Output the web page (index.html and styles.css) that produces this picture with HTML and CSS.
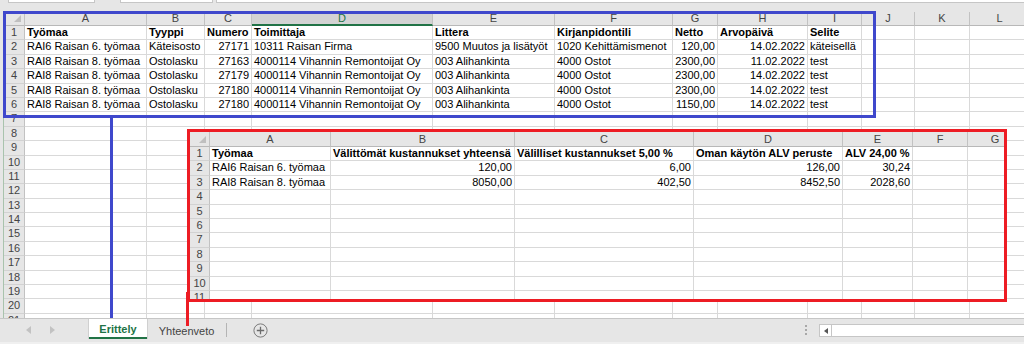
FILE: index.html
```html
<!DOCTYPE html>
<html lang="fi">
<head>
<meta charset="utf-8">
<title>Erittely</title>
<link rel="stylesheet" href="styles.css">
</head>
<body>
<div class="top"><div class="fbox f1"></div><div class="fbox f2"></div><div class="fbox f3"></div></div>

<div class="sheet">
  <div class="edge"></div>
  <div class="grid main">
    <div class="row head"><span class="corner"></span><span>A</span><span>B</span><span>C</span><span class="sel">D</span><span>E</span><span>F</span><span>G</span><span>H</span><span>I</span><span>J</span><span>K</span><span>L</span></div>
    <div class="row b"><span class="rh">1</span><span>Työmaa</span><span>Tyyppi</span><span>Numero</span><span>Toimittaja</span><span>Littera</span><span>Kirjanpidontili</span><span>Netto</span><span>Arvopäivä</span><span>Selite</span><span></span><span></span><span></span></div>
    <div class="row"><span class="rh">2</span><span>RAI6 Raisan 6. työmaa</span><span>Käteisosto</span><span class="n">27171</span><span>10311 Raisan Firma</span><span>9500 Muutos ja lisätyöt</span><span>1020 Kehittämismenot</span><span class="n">120,00</span><span class="n">14.02.2022</span><span>käteisellä</span><span></span><span></span><span></span></div>
    <div class="row"><span class="rh">3</span><span>RAI8 Raisan 8. työmaa</span><span>Ostolasku</span><span class="n">27163</span><span>4000114 Vihannin Remontoijat Oy</span><span>003 Alihankinta</span><span>4000 Ostot</span><span class="n">2300,00</span><span class="n">11.02.2022</span><span>test</span><span></span><span></span><span></span></div>
    <div class="row"><span class="rh">4</span><span>RAI8 Raisan 8. työmaa</span><span>Ostolasku</span><span class="n">27179</span><span>4000114 Vihannin Remontoijat Oy</span><span>003 Alihankinta</span><span>4000 Ostot</span><span class="n">2300,00</span><span class="n">14.02.2022</span><span>test</span><span></span><span></span><span></span></div>
    <div class="row"><span class="rh">5</span><span>RAI8 Raisan 8. työmaa</span><span>Ostolasku</span><span class="n">27180</span><span>4000114 Vihannin Remontoijat Oy</span><span>003 Alihankinta</span><span>4000 Ostot</span><span class="n">2300,00</span><span class="n">14.02.2022</span><span>test</span><span></span><span></span><span></span></div>
    <div class="row"><span class="rh">6</span><span>RAI8 Raisan 8. työmaa</span><span>Ostolasku</span><span class="n">27180</span><span>4000114 Vihannin Remontoijat Oy</span><span>003 Alihankinta</span><span>4000 Ostot</span><span class="n">1150,00</span><span class="n">14.02.2022</span><span>test</span><span></span><span></span><span></span></div>
    <div class="row"><span class="rh">7</span><span></span><span></span><span></span><span></span><span></span><span></span><span></span><span></span><span></span><span></span><span></span><span></span></div>
    <div class="row"><span class="rh">8</span><span></span><span></span><span></span><span></span><span></span><span></span><span></span><span></span><span></span><span></span><span></span><span></span></div>
    <div class="row"><span class="rh">9</span><span></span><span></span><span></span><span></span><span></span><span></span><span></span><span></span><span></span><span></span><span></span><span></span></div>
    <div class="row"><span class="rh">10</span><span></span><span></span><span></span><span></span><span></span><span></span><span></span><span></span><span></span><span></span><span></span><span></span></div>
    <div class="row"><span class="rh">11</span><span></span><span></span><span></span><span></span><span></span><span></span><span></span><span></span><span></span><span></span><span></span><span></span></div>
    <div class="row"><span class="rh">12</span><span></span><span></span><span></span><span></span><span></span><span></span><span></span><span></span><span></span><span></span><span></span><span></span></div>
    <div class="row"><span class="rh">13</span><span></span><span></span><span></span><span></span><span></span><span></span><span></span><span></span><span></span><span></span><span></span><span></span></div>
    <div class="row"><span class="rh">14</span><span></span><span></span><span></span><span></span><span></span><span></span><span></span><span></span><span></span><span></span><span></span><span></span></div>
    <div class="row"><span class="rh">15</span><span></span><span></span><span></span><span></span><span></span><span></span><span></span><span></span><span></span><span></span><span></span><span></span></div>
    <div class="row"><span class="rh">16</span><span></span><span></span><span></span><span></span><span></span><span></span><span></span><span></span><span></span><span></span><span></span><span></span></div>
    <div class="row"><span class="rh">17</span><span></span><span></span><span></span><span></span><span></span><span></span><span></span><span></span><span></span><span></span><span></span><span></span></div>
    <div class="row"><span class="rh">18</span><span></span><span></span><span></span><span></span><span></span><span></span><span></span><span></span><span></span><span></span><span></span><span></span></div>
    <div class="row"><span class="rh">19</span><span></span><span></span><span></span><span></span><span></span><span></span><span></span><span></span><span></span><span></span><span></span><span></span></div>
    <div class="row"><span class="rh">20</span><span></span><span></span><span></span><span></span><span></span><span></span><span></span><span></span><span></span><span></span><span></span><span></span></div>
    <div class="row"><span class="rh">21</span><span></span><span></span><span></span><span></span><span></span><span></span><span></span><span></span><span></span><span></span><span></span><span></span></div>
  </div>
</div>

<div class="tabbar">
  <div class="nav">
    <svg class="arr-l" width="5" height="8" viewBox="0 0 5 8"><path d="M5 0L0 4L5 8Z" fill="#c2c2c2"/></svg>
    <svg class="arr-r" width="5" height="8" viewBox="0 0 5 8"><path d="M0 0L5 4L0 8Z" fill="#c2c2c2"/></svg>
  </div>
  <div class="tab active">Erittely</div>
  <div class="tab other">Yhteenveto</div>
  <span class="sep"></span>
  <svg class="add" width="15" height="15" viewBox="0 0 15 15"><circle cx="7.5" cy="7.5" r="6.6" fill="none" stroke="#7b7b7b" stroke-width="1"/><path d="M7.5 3.8v7.4M3.8 7.5h7.4" stroke="#6b6b6b" stroke-width="1.3"/></svg>
  <div class="dots"><i></i><i></i><i></i></div>
  <div class="hscroll"><span class="sbtn"><svg width="4" height="6" viewBox="0 0 4 6"><path d="M4 0L0 3L4 6Z" fill="#555"/></svg></span></div>
</div>

<div class="mark blue-box"></div>
<div class="mark blue-line"></div>

<div class="inset">
  <div class="grid sub">
    <div class="row head"><span class="corner"></span><span>A</span><span>B</span><span>C</span><span>D</span><span>E</span><span>F</span><span>G</span></div>
    <div class="row b"><span class="rh">1</span><span>Työmaa</span><span>Välittömät kustannukset yhteensä</span><span>Välilliset kustannukset 5,00 %</span><span>Oman käytön ALV peruste</span><span>ALV 24,00 %</span><span></span><span></span></div>
    <div class="row"><span class="rh">2</span><span>RAI6 Raisan 6. työmaa</span><span class="n">120,00</span><span class="n">6,00</span><span class="n">126,00</span><span class="n">30,24</span><span></span><span></span></div>
    <div class="row"><span class="rh">3</span><span>RAI8 Raisan 8. työmaa</span><span class="n">8050,00</span><span class="n">402,50</span><span class="n">8452,50</span><span class="n">2028,60</span><span></span><span></span></div>
    <div class="row"><span class="rh">4</span><span></span><span></span><span></span><span></span><span></span><span></span><span></span></div>
    <div class="row"><span class="rh">5</span><span></span><span></span><span></span><span></span><span></span><span></span><span></span></div>
    <div class="row"><span class="rh">6</span><span></span><span></span><span></span><span></span><span></span><span></span><span></span></div>
    <div class="row"><span class="rh">7</span><span></span><span></span><span></span><span></span><span></span><span></span><span></span></div>
    <div class="row"><span class="rh">8</span><span></span><span></span><span></span><span></span><span></span><span></span><span></span></div>
    <div class="row"><span class="rh">9</span><span></span><span></span><span></span><span></span><span></span><span></span><span></span></div>
    <div class="row"><span class="rh">10</span><span></span><span></span><span></span><span></span><span></span><span></span><span></span></div>
    <div class="row"><span class="rh">11</span><span></span><span></span><span></span><span></span><span></span><span></span><span></span></div>
  </div>
</div>

<div class="mark red-line"></div>
</body>
</html>
```

FILE: styles.css
```css
* { box-sizing: border-box; }

body {
  margin: 0;
  width: 1024px;
  height: 344px;
  overflow: hidden;
  position: relative;
  background: #e6e6e6;
  font-family: "Liberation Sans", Arial, sans-serif;
  font-size: 11px;
  color: #000;
}

/* top strip (bottom of formula bar) */
.top {
  height: 12px;
  display: flex;
  align-items: flex-start;
}
.fbox {
  height: 3px;
  background: #fff;
  border: 1px solid #c6c6c6;
  border-top: none;
}
.f1 { margin-left: 8px; width: 87px; }
.f2 { margin-left: 25px; width: 93px; }
.f3 { margin-left: 3px; flex: 1; border-right: none; }

/* sheet */
.sheet {
  display: flex;
  height: 306px;
  overflow: hidden;
  padding-left: 3px;
  background: #e6e6e6;
}
.edge {
  flex: none;
  width: 1px;
  background: #a9c3ad;
}
.grid { flex: none; }

.row {
  display: grid;
  height: 14.4px;
}
.main .row {
  grid-template-columns: 21px 122px 58px 47px 181px 122px 118px 45px 90px 54px 53px 55px 60px;
}
.sub .row {
  grid-template-columns: 20px 121px 184px 179px 149px 70px 55px 55px;
}

.row > span {
  display: block;
  border-right: 1px solid #d9d9d9;
  border-bottom: 1px solid #d9d9d9;
  padding: 0 2px;
  line-height: 13.4px;
  white-space: nowrap;
  overflow: hidden;
  background: #fff;
}
.row > .n { text-align: right; }
.row.b > span { font-weight: bold; }
.row > .rh {
  background: #e6e6e6;
  color: #444;
  font-weight: normal !important;
  text-align: center;
  padding: 0;
  border-right-color: #c2c2c2;
  border-bottom-color: #d2d2d2;
}

.row.head { height: 14px; }
.sub .row.head { height: 15px; }
.row.head > span {
  background: #e6e6e6;
  color: #444;
  text-align: center;
  padding: 0;
  line-height: 13px;
  border-right-color: #c2c2c2;
  border-bottom-color: #b8b8b8;
}
.sub .row.head > span { line-height: 14px; }
.row.head > .sel {
  background: #d3d3d3;
  color: #217346;
  border-bottom: 2px solid #217346;
  line-height: 12px;
}
.row.head > .corner { position: relative; }
.row.head > .corner::after {
  content: "";
  position: absolute;
  right: 3px;
  bottom: 3px;
  border-left: 7px solid transparent;
  border-bottom: 7px solid #bfbfbf;
}

/* sheet tabs */
.tabbar {
  display: flex;
  align-items: flex-start;
  height: 26px;
  border-top: 1px solid #c6c6c6;
  border-bottom: 2px solid #f0f0f0;
  background: #e6e6e6;
}
.nav {
  flex: none;
  width: 89px;
  height: 22px;
  display: flex;
  align-items: center;
}
.arr-l { margin-left: 26px; }
.arr-r { margin-left: 19px; }

.tab {
  flex: none;
  height: 22px;
  display: flex;
  align-items: center;
  justify-content: center;
  color: #444;
  padding-top: 1px;
}
.tab.active {
  width: 58px;
  height: 20px;
  padding-top: 2px;
  background: #fff;
  color: #217346;
  font-weight: bold;
  border-bottom: 2px solid #217346;
  box-shadow: -1px 0 0 #d0d0d0, 1px 0 0 #d0d0d0;
}
.tab.other { width: 79px; }
.sep {
  flex: none;
  width: 1px;
  height: 14px;
  margin-top: 4px;
  background: #b4b4b4;
}
.add {
  flex: none;
  margin-left: 26px;
  margin-top: 4px;
}
.dots {
  margin-left: auto;
  margin-top: 6px;
  width: 2px;
  display: flex;
  flex-direction: column;
  gap: 2px;
}
.dots i {
  display: block;
  width: 2px;
  height: 2px;
  background: #a8a8a8;
}
.hscroll {
  flex: none;
  width: 205px;
  height: 13px;
  margin-left: 12px;
  margin-top: 5px;
  border: 1px solid #c6c6c6;
  border-right: none;
  background: #fff;
  display: flex;
}
.sbtn {
  width: 12px;
  border-right: 1px solid #c6c6c6;
  display: flex;
  align-items: center;
  justify-content: center;
}

/* annotation overlays */
.mark { position: absolute; }
.blue-box {
  box-sizing: content-box;
  left: 3px;
  top: 11px;
  width: 867px;
  height: 101px;
  border: 3px solid #3f48cc;
}
.blue-line {
  left: 110px;
  top: 118px;
  width: 3px;
  height: 200px;
  background: #3f48cc;
}
.inset {
  position: absolute;
  box-sizing: content-box;
  left: 187px;
  top: 129px;
  width: 814px;
  height: 167px;
  border: 3px solid #ed1c24;
  overflow: hidden;
  background: #fff;
}
.red-line {
  left: 186px;
  top: 292px;
  width: 3px;
  height: 34px;
  background: #ed1c24;
}
```
